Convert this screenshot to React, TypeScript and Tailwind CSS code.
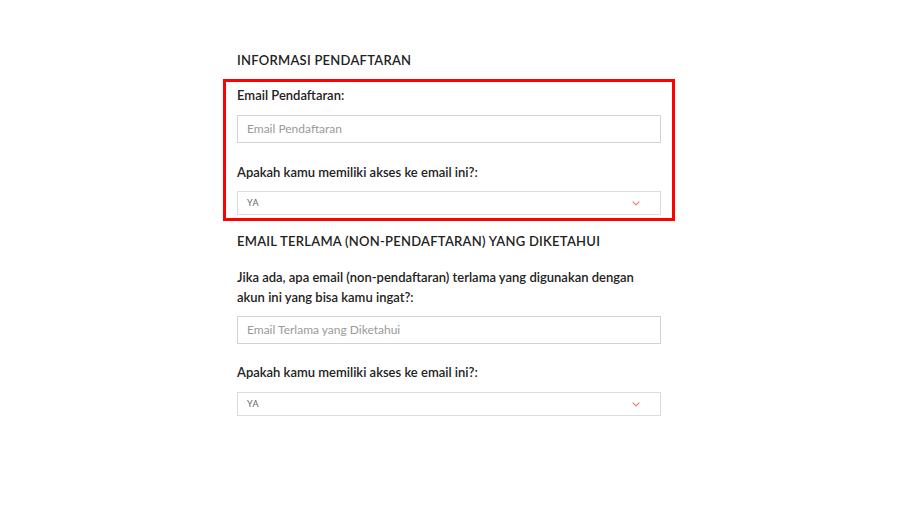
function Label({ children }: { children: React.ReactNode }) {
  return <p className="text-[13px] font-semibold leading-[20px] text-[#222]">{children}</p>;
}

function TextInput({ placeholder }: { placeholder: string }) {
  return (
    <div className="h-[28px] border border-[#cfd3d6] px-[9px] flex items-center text-[12px] text-[#9a9a9a]">
      {placeholder}
    </div>
  );
}

function SelectBox({ value }: { value: string }) {
  return (
    <div className="h-[24px] border border-[#dcdcdc] pl-[9px] pr-[20px] flex items-center justify-between text-[9px] tracking-[0.6px] text-[#666]">
      <span>{value}</span>
      <svg width="8" height="5" viewBox="0 0 8 5" className="mt-[1px]">
        <polyline points="0.7,0.7 4,4 7.3,0.7" fill="none" stroke="#f27b7b" strokeWidth="1.2" />
      </svg>
    </div>
  );
}

export default function App() {
  return (
    <div className="w-[900px] h-[505px] bg-white font-['Lato',sans-serif]">
      <div className="w-[424px] ml-[237px] pt-[51px]">
        <h2 className="text-[13px] font-semibold leading-[18px] text-[#222] tracking-[0.25px]">
          INFORMASI PENDAFTARAN
        </h2>

        {/* highlighted block */}
        <div className="mt-[10px] -mx-[14px] border-[3px] border-[#ff0000] px-[11px] pt-[3px] pb-[3px]">
          <Label>Email Pendaftaran:</Label>
          <div className="mt-[10px]">
            <TextInput placeholder="Email Pendaftaran" />
          </div>
          <div className="mt-[19px]">
            <Label>Apakah kamu memiliki akses ke email ini?:</Label>
          </div>
          <div className="mt-[9px]">
            <SelectBox value="YA" />
          </div>
        </div>

        <h2 className="mt-[11px] text-[13px] font-semibold leading-[18px] text-[#222] tracking-[0.25px]">
          EMAIL TERLAMA (NON-PENDAFTARAN) YANG DIKETAHUI
        </h2>

        <div className="mt-[17px]">
          <Label>
            Jika ada, apa email (non-pendaftaran) terlama yang digunakan dengan
            <br />
            akun ini yang bisa kamu ingat?:
          </Label>
        </div>
        <div className="mt-[9px]">
          <TextInput placeholder="Email Terlama yang Diketahui" />
        </div>
        <div className="mt-[18px]">
          <Label>Apakah kamu memiliki akses ke email ini?:</Label>
        </div>
        <div className="mt-[10px]">
          <SelectBox value="YA" />
        </div>
      </div>
    </div>
  );
}
